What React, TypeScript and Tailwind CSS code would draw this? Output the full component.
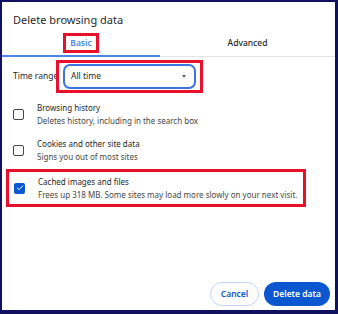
import { Check } from "lucide-react";

const font = { fontFamily: '"Noto Sans", "Open Sans", sans-serif' };

function Row({
  title,
  desc,
  checked = false,
}: {
  title: string;
  desc: string;
  checked?: boolean;
}) {
  return (
    <div className="flex items-center gap-[13px]">
      {checked ? (
        <div className="w-[11px] h-[11px] rounded-[2px] bg-[#0b57d0] flex items-center justify-center">
          <Check className="w-[8px] h-[8px] text-white" strokeWidth={3} />
        </div>
      ) : (
        <div className="w-[11px] h-[11px] rounded-[2px] border-[1.5px] border-[#444746]" />
      )}
      <div className="flex flex-col leading-[13px] whitespace-nowrap">
        <span className="text-[8px] text-[#1f1f1f]">{title}</span>
        <span className="text-[8px] text-[#474747]">{desc}</span>
      </div>
    </div>
  );
}

export default function App() {
  return (
    <div
      style={font}
      className="w-[338px] h-[314px] bg-[#10115e] p-[2px] pr-[3px] pb-[4px]"
    >
      <div className="w-full h-full bg-white flex flex-col">
        <div className="px-[11px] pt-[11px] text-[11px] text-[#2b2b2b] leading-[14px]">
          Delete browsing data
        </div>

        {/* Tabs */}
        <div className="flex mt-[6px] border-b border-[#e3e3e3]">
          <div className="w-[158px] flex justify-center pb-[2px] border-b-2 border-[#4a86e8] -mb-px">
            <span className="border-[3px] border-[#e8102a] px-[4px] py-[1px] text-[8.5px] font-semibold text-[#4a86e8] leading-[12px]">
              Basic
            </span>
          </div>
          <div className="flex-1 flex justify-center items-center pb-[2px]">
            <span className="text-[8.5px] text-[#1f1f1f] font-medium">Advanced</span>
          </div>
        </div>

        {/* Time range */}
        <div className="flex items-center mt-[3px] pl-[11px]">
          <span className="text-[8.5px] text-[#1f1f1f] w-[43px] whitespace-nowrap overflow-visible">
            Time range
          </span>
          <div className="border-[3px] border-[#e8102a] px-[4px] py-[1px]">
            <div className="w-[133px] h-[25px] rounded-[7px] border-2 border-[#3b74e0] flex items-center justify-between pl-[6px] pr-[8px]">
              <span className="text-[8.5px] text-[#1f1f1f]">All time</span>
              <span className="w-0 h-0 border-l-[2.5px] border-r-[2.5px] border-t-[3px] border-l-transparent border-r-transparent border-t-[#5f6368]" />
            </div>
          </div>
        </div>

        <div className="flex flex-col pl-[11px] mt-[8px] gap-[10px]">
          <Row title="Browsing history" desc="Deletes history, including in the search box" />
          <Row title="Cookies and other site data" desc="Signs you out of most sites" />
        </div>

        <div className="ml-[4px] mt-[6px] w-[300px] border-[3px] border-[#e8102a] pl-[5px] py-[3px]">
          <Row
            checked
            title="Cached images and files"
            desc="Frees up 318 MB. Some sites may load more slowly on your next visit."
          />
        </div>

        <div className="mt-auto flex justify-end gap-[5px] pr-[5px] pb-[4px]">
          <button className="h-[24px] w-[49px] rounded-full border border-[#c2d4f5] text-[8.5px] font-semibold text-[#0b57d0]">
            Cancel
          </button>
          <button className="h-[24px] w-[66px] rounded-full bg-[#0b57d0] text-[8.5px] font-semibold text-white">
            Delete data
          </button>
        </div>
      </div>
    </div>
  );
}
